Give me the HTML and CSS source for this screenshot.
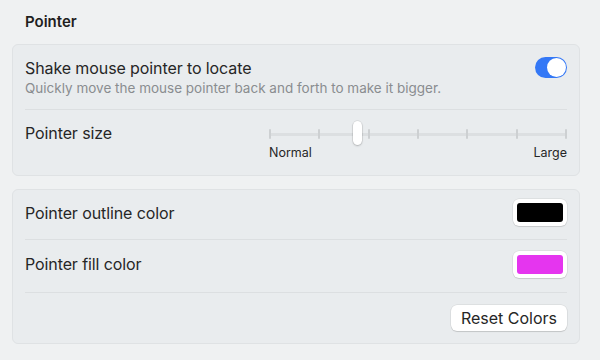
FILE: index.html
```html
<!DOCTYPE html>
<html lang="en">
<head>
  <meta charset="UTF-8">
  <title>Pointer</title>
  <link rel="stylesheet" href="styles.css">
</head>
<body>
  <div class="page">
    <h2 class="section-title">Pointer</h2>

    <div class="group">
      <div class="row row-shake">
        <div class="row-text">
          <div class="row-title">Shake mouse pointer to locate</div>
          <div class="row-sub">Quickly move the mouse pointer back and forth to make it bigger.</div>
        </div>
        <div class="toggle on"><span class="toggle-knob"></span></div>
      </div>
      <div class="row row-size">
        <div class="row-title">Pointer size</div>
        <div class="slider">
          <div class="track">
            <span class="tick"></span>
            <span class="tick"></span>
            <span class="tick"></span>
            <span class="tick"></span>
            <span class="tick"></span>
            <span class="tick"></span>
            <span class="tick"></span>
            <span class="knob"></span>
          </div>
          <div class="slider-labels">
            <span>Normal</span>
            <span>Large</span>
          </div>
        </div>
      </div>
    </div>

    <div class="group">
      <div class="row row-color">
        <div class="row-title">Pointer outline color</div>
        <div class="swatch"><span class="swatch-fill black"></span></div>
      </div>
      <div class="row row-color">
        <div class="row-title">Pointer fill color</div>
        <div class="swatch"><span class="swatch-fill magenta"></span></div>
      </div>
      <div class="row row-reset">
        <button class="button">Reset Colors</button>
      </div>
    </div>
  </div>
</body>
</html>
```

FILE: styles.css
```css
body {
  margin: 0;
  background-color: #eff1f2;
  font-family: 'Inter', 'Noto Sans', sans-serif;
  color: #262626;
}
.page {
  padding: 0 20px 0 12px;
}
.section-title {
  margin: 0;
  padding: 12px 0 0 13px;
  height: 32px;
  font-size: 15px;
  font-weight: 600;
  color: #1f1f1f;
}
.group {
  background-color: #e9ecee;
  border: 1px solid #dfe2e4;
  border-radius: 6px;
  padding: 0 12px;
  margin-bottom: 13px;
}
.row {
  display: flex;
  justify-content: space-between;
  align-items: center;
}
.row + .row {
  border-top: 1px solid #dcdfe1;
}
.row-title {
  font-size: 16px;
  letter-spacing: -0.1px;
  color: #262626;
}
.row-sub {
  font-size: 13.5px;
  color: #8a8d90;
  margin-top: 2px;
}
.row-shake {
  height: 63px;
  padding-bottom: 1px;
}
.toggle {
  width: 32px;
  height: 21px;
  border-radius: 11px;
  background-color: #d5d8da;
  display: flex;
  align-items: center;
  padding: 1px;
  box-sizing: border-box;
  margin-top: -19px;
}
.toggle.on {
  background-color: #3478f6;
  justify-content: flex-end;
}
.toggle-knob {
  width: 19px;
  height: 19px;
  border-radius: 50%;
  background-color: #fff;
}
.row-size {
  height: 65px;
  align-items: flex-start;
}
.row-size .row-title {
  margin-top: 13px;
}
.slider {
  width: 298px;
  margin-top: 18px;
}
.track {
  position: relative;
  height: 12px;
  display: flex;
  justify-content: space-between;
  align-items: center;
}
.track::before {
  content: "";
  position: absolute;
  left: 0;
  right: 0;
  top: 5px;
  height: 3px;
  background-color: #dcdfe1;
}
.tick {
  position: relative;
  width: 2px;
  height: 10px;
  background-color: #cdd0d2;
  border-radius: 1px;
}
.knob {
  position: absolute;
  left: 84px;
  top: -7px;
  width: 9px;
  height: 24px;
  border-radius: 5px;
  background-color: #fff;
  box-shadow: 0 0 0 0.5px rgba(0,0,0,0.12), 0 1px 2px rgba(0,0,0,0.2);
}
.slider-labels {
  display: flex;
  justify-content: space-between;
  font-size: 12.5px;
  color: #262626;
  margin-top: 5px;
}
.row-color {
  height: 45px;
  padding-bottom: 4px;
}
.row-color + .row-color {
  height: 48px;
  padding-bottom: 4px;
}
.swatch {
  width: 54px;
  height: 27px;
  box-sizing: border-box;
  padding: 4px;
  background-color: #fff;
  border-radius: 6px;
  box-shadow: 0 0 0 0.5px rgba(0,0,0,0.1), 0 1px 1px rgba(0,0,0,0.1);
}
.swatch-fill {
  display: block;
  height: 100%;
  border-radius: 3px;
}
.swatch-fill.black {
  background-color: #000;
}
.swatch-fill.magenta {
  background-color: #e535ef;
}
.row-reset {
  height: 50px;
  justify-content: flex-end;
}
.button {
  font-family: inherit;
  font-size: 16px;
  color: #262626;
  background-color: #fff;
  border: none;
  border-radius: 6px;
  height: 26px;
  padding: 0 10px;
  box-shadow: 0 0 0 0.5px rgba(0,0,0,0.1), 0 1px 1px rgba(0,0,0,0.12);
}
```
